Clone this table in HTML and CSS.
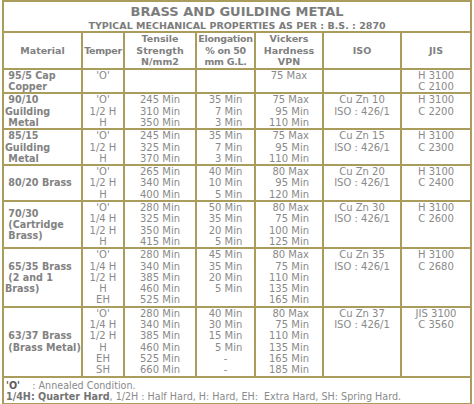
FILE: index.html
```html
<!DOCTYPE html>
<html>
<head>
<meta charset="utf-8">
<link rel="stylesheet" href="styles.css">
</head>
<body>
<table class="props">
<colgroup>
<col class="c1"><col class="c2"><col class="c3"><col class="c4"><col class="c5"><col class="c6"><col class="c7">
</colgroup>
<tr>
<td colspan="7" class="title-cell"><div class="title">BRASS AND GUILDING METAL</div><div class="subtitle">TYPICAL MECHANICAL PROPERTIES AS PER : B.S. : 2870</div></td>
</tr>
<tr class="head">
<td>Material</td><td class="tight">Temper</td><td>Tensile<br>Strength<br>N/mm2</td><td class="tight">Elongation<br>% on 50<br>mm G.L.</td><td>Vickers<br>Hardness<br>VPN</td><td>ISO</td><td>JIS</td>
</tr>
<tr>
<td class="mat">&nbsp;95/5 Cap<br>&nbsp;Copper</td>
<td>'O'</td><td></td><td></td>
<td><div class="r">75 Max</div></td>
<td></td>
<td>H 3100<br>C 2100</td>
</tr>
<tr>
<td class="mat">&nbsp;90/10<br>Guilding<br>&nbsp;Metal</td>
<td>'O'<br>1/2 H<br>H</td>
<td>245 Min<br>310 Min<br>350 Min</td>
<td><div class="r">35 Min<br>7 Min<br>3 Min</div></td>
<td><div class="r">75 Max<br>95 Min<br>110 Min</div></td>
<td>Cu Zn 10<br>ISO : 426/1</td>
<td>H 3100<br>C 2200</td>
</tr>
<tr>
<td class="mat">&nbsp;85/15<br>Guilding<br>&nbsp;Metal</td>
<td>'O'<br>1/2 H<br>H</td>
<td>245 Min<br>325 Min<br>370 Min</td>
<td><div class="r">35 Min<br>7 Min<br>3 Min</div></td>
<td><div class="r">75 Max<br>95 Min<br>110 Min</div></td>
<td>Cu Zn 15<br>ISO : 426/1</td>
<td>H 3100<br>C 2300</td>
</tr>
<tr>
<td class="mat">&nbsp;80/20 Brass</td>
<td>'O'<br>1/2 H<br>H</td>
<td>265 Min<br>340 Min<br>400 Min</td>
<td><div class="r">40 Min<br>10 Min<br>5 Min</div></td>
<td><div class="r">80 Max<br>95 Min<br>120 Min</div></td>
<td>Cu Zn 20<br>ISO : 426/1</td>
<td>H 3100<br>C 2400</td>
</tr>
<tr>
<td class="mat">&nbsp;70/30<br>&nbsp;(Cartridge<br>&nbsp;Brass)</td>
<td>'O'<br>1/4 H<br>1/2 H<br>H</td>
<td>280 Min<br>325 Min<br>350 Min<br>415 Min</td>
<td><div class="r">50 Min<br>35 Min<br>20 Min<br>5 Min</div></td>
<td><div class="r">80 Max<br>75 Min<br>100 Min<br>125 Min</div></td>
<td>Cu Zn 30<br>ISO : 426/1</td>
<td>H 3100<br>C 2600</td>
</tr>
<tr>
<td class="mat">&nbsp;65/35 Brass<br>&nbsp;(2 and 1<br>Brass)</td>
<td>'O'<br>1/4 H<br>1/2 H<br>H<br>EH</td>
<td>280 Min<br>340 Min<br>385 Min<br>460 Min<br>525 Min</td>
<td><div class="r">45 Min<br>35 Min<br>20 Min<br>5 Min</div></td>
<td><div class="r">80 Max<br>75 Min<br>110 Min<br>135 Min<br>165 Min</div></td>
<td>Cu Zn 35<br>ISO : 426/1</td>
<td>H 3100<br>C 2680</td>
</tr>
<tr>
<td class="mat">&nbsp;63/37 Brass<br>&nbsp;(Brass Metal)</td>
<td>'O'<br>1/4 H<br>1/2 H<br>H<br>EH<br>SH</td>
<td>280 Min<br>340 Min<br>385 Min<br>460 Min<br>525 Min<br>660 Min</td>
<td><div class="r">40 Min<br>30 Min<br>15 Min<br>5 Min<span class="dash">-</span><span class="dash">-</span></div></td>
<td><div class="r">80 Max<br>75 Min<br>110 Min<br>135 Min<br>165 Min<br>185 Min</div></td>
<td>Cu Zn 37<br>ISO : 426/1</td>
<td>JIS 3100<br>C 3560</td>
</tr>
<tr>
<td colspan="7" class="foot"><b class="dk">'O'</b>&nbsp;&nbsp;&nbsp; : Annealed Condition.<br><b>1/4H: Quarter Hard</b>, 1/2H : Half Hard, H: Hard, EH: &nbsp;Extra Hard, SH: Spring Hard.</td>
</tr>
</table>
</body>
</html>
```
FILE: styles.css
```css
html, body {
  margin: 0;
  padding: 0;
  background: #ffffff;
}

.props {
  border-collapse: collapse;
  table-layout: fixed;
  width: 470px;
  margin: 0 0 0 2px;
  font-family: "DejaVu Sans", Verdana, sans-serif;
}

.c1 { width: 79px; }
.c2 { width: 42px; }
.c3 { width: 72px; }
.c4 { width: 59px; }
.c5 { width: 68px; }
.c6 { width: 78px; }
.c7 { width: 70px; }

.props td {
  border: 2px solid #aa9d5c;
  padding: 0;
  font-size: 10px;
  line-height: 11.3px;
  color: #8a8a8a;
  text-align: center;
  vertical-align: top;
  white-space: nowrap;
}

.props td.title-cell {
  padding: 2px 0 0;
  color: #7c7c7c;
  font-weight: bold;
}

.title {
  font-size: 13px;
  line-height: 16px;
}

.subtitle {
  font-size: 9.5px;
  line-height: 11px;
}

.head td {
  font-weight: bold;
  font-size: 9.5px;
  line-height: 11.6px;
  color: #808080;
  vertical-align: middle;
}

.head td.tight {
  letter-spacing: -0.3px;
}

.props td.mat {
  text-align: left;
  vertical-align: middle;
  font-weight: bold;
  font-size: 9.6px;
  color: #828282;
  padding-left: 1px;
}

.r {
  display: inline-block;
  text-align: right;
}

.dash {
  display: block;
  text-align: center;
}

.props td.foot {
  text-align: left;
  vertical-align: middle;
  padding: 2px 0 1px 2px;
  font-size: 9.6px;
  line-height: 11px;
  color: #8a8a8a;
}

.foot b {
  color: #747474;
}

.foot b.dk {
  color: #5c5c5c;
}
```
